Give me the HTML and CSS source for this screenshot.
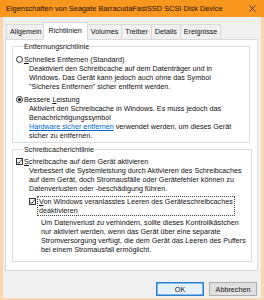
FILE: index.html
```html
<!DOCTYPE html>
<html lang="de">
<head>
<meta charset="UTF-8" />
<meta name="viewport" content="width=device-width, initial-scale=1" />
<title>Eigenschaften von Seagate BarracudaFastSSD SCSI Disk Device</title>
<link rel="stylesheet" href="styles.css">
</head>
<body>
<div class="window">
  <div class="titlebar">
    <span class="title">Eigenschaften von Seagate BarracudaFastSSD SCSI Disk Device</span>
    <svg class="close" width="7" height="7" viewBox="0 0 7 7" aria-label="Schließen">
      <path d="M0.5 0.5 L6.5 6.5 M6.5 0.5 L0.5 6.5" stroke="#2a2a2a" stroke-width="0.9" fill="none" />
    </svg>
  </div>

  <div class="frame">
    <div class="tabs">
      <span class="tab">Allgemein</span>
      <span class="tab active">Richtlinien</span>
      <span class="tab">Volumes</span>
      <span class="tab">Treiber</span>
      <span class="tab">Details</span>
      <span class="tab">Ereignisse</span>
    </div>

    <div class="panel">
      <!-- Entfernungsrichtlinie -->
      <fieldset class="group">
        <legend>Entfernungsrichtlinie</legend>

        <div class="option">
          <span class="radio"></span>
          <span class="label"><u>S</u>chnelles Entfernen (Standard)</span>
        </div>
        <p class="desc">Deaktiviert den Schreibcache auf dem Datenträger und in<br>Windows. Das Gerät kann jedoch auch ohne das Symbol<br>"Sicheres Entfernen" sicher entfernt werden.</p>

        <div class="option gap">
          <span class="radio checked"></span>
          <span class="label">Bessere <u>L</u>eistung</span>
        </div>
        <p class="desc">Aktiviert den Schreibcache in Windows. Es muss jedoch das<br>Benachrichtigungssymbol<br><a class="link" href="#">Hardware sicher entfernen</a> verwendet werden, um dieses Gerät<br>sicher zu entfernen.</p>
      </fieldset>

      <!-- Schreibcacherichtlinie -->
      <fieldset class="group second">
        <legend>Schreibcacherichtlinie</legend>

        <div class="option">
          <span class="check"><svg width="7" height="7" viewBox="0 0 7 7"><path d="M1 3.6 L2.8 5.4 L6 1.4" stroke="#222" stroke-width="0.9" fill="none" /></svg></span>
          <span class="label"><u>S</u>chreibcache auf dem Gerät aktivieren</span>
        </div>
        <p class="desc">Verbessert die Systemleistung durch Aktivieren des Schreibcaches<br>auf dem Gerät, doch Stromausfälle oder Gerätefehler können zu<br>Datenverlusten oder -beschädigung führen.</p>

        <div class="sub">
          <div class="option top">
            <span class="check"><svg width="7" height="7" viewBox="0 0 7 7"><path d="M1 3.6 L2.8 5.4 L6 1.4" stroke="#222" stroke-width="0.9" fill="none" /></svg></span>
            <span class="label focus"><u>V</u>on Windows veranlasstes Leeren des Geräteschreibcaches<br>deaktivieren</span>
          </div>
          <p class="desc">Um Datenverlust zu verhindern, sollte dieses Kontrollkästchen<br>nur aktiviert werden, wenn das Gerät über eine separate<br>Stromversorgung verfügt, die dem Gerät das Leeren des Puffers<br>bei einem Stromausfall ermöglicht.</p>
        </div>
      </fieldset>
    </div>

    <div class="buttons">
      <button class="btn default">OK</button>
      <button class="btn">Abbrechen</button>
    </div>
  </div>
</div>
</body>
</html>
```

FILE: styles.css
```css
/* Reset */
* {
  margin: 0;
  padding: 0;
  box-sizing: border-box;
}

body {
  width: 264px;
  height: 300px;
  overflow: hidden;
  font-family: 'Liberation Sans', Arial, sans-serif;
  font-size: 7.2px;
  line-height: 9px;
  color: #111;
  background: #fbdcb8;
}

.window {
  display: flex;
  flex-direction: column;
  height: 300px;
}

/* Titelleiste */
.titlebar {
  height: 17px;
  background: #f8961e;
  display: flex;
  align-items: center;
  justify-content: space-between;
  padding: 0 8px 0 6px;
  flex-shrink: 0;
}

.title {
  font-size: 7.4px;
  color: #1e1406;
  white-space: nowrap;
}

.close {
  display: block;
}

.frame {
  flex: 1;
  background: #f0f0f0;
  border-left: 3px solid #fbd7ad;
  border-right: 3px solid #fbd7ad;
  border-bottom: 2px solid #fbd7ad;
  padding: 5px 3px 0 2px;
  display: flex;
  flex-direction: column;
}

/* Reiter */
.tabs {
  display: flex;
  align-items: flex-end;
  height: 17px;
  padding-left: 1px;
}

.tab {
  height: 15px;
  line-height: 13px;
  padding: 0 3px;
  border: 1px solid #d9d9d9;
  border-bottom: none;
  margin-right: -1px;
  background: #f0f0f0;
  white-space: nowrap;
}

.tab.active {
  position: relative;
  z-index: 1;
  height: 18px;
  line-height: 15px;
  margin: 0 -1px -1px -2px;
  padding: 0 5px;
  background: #fff;
}

.panel {
  background: #fff;
  border: 1px solid #d9d9d9;
  padding: 2px 7px 8px 6px;
}

/* Gruppenfelder */
.group {
  border: 1px solid #dcdcdc;
  padding: 4px 5px 2px 3px;
}

.group legend {
  margin-left: 7px;
  padding: 0 1px;
  line-height: 9px;
}

.group.second {
  margin-top: 2px;
  padding-top: 3px;
  padding-bottom: 7px;
}

.option {
  display: flex;
  align-items: center;
  gap: 1px;
}

.option.gap {
  margin-top: 4px;
}

.option.top {
  align-items: flex-start;
}

.radio {
  width: 7px;
  height: 7px;
  border: 1px solid #333;
  border-radius: 50%;
  flex-shrink: 0;
  display: flex;
  align-items: center;
  justify-content: center;
}

.radio.checked::after {
  content: "";
  width: 3px;
  height: 3px;
  border-radius: 50%;
  background: #111;
}

.check {
  width: 7px;
  height: 7px;
  border: 1px solid #333;
  flex-shrink: 0;
  display: flex;
}

.check svg {
  display: block;
  margin: -1px;
}

.option.top .check {
  margin-top: 2px;
}

.label {
  white-space: nowrap;
}

.label.focus {
  display: inline-block;
  border: 1px dotted #444;
  margin-left: 0;
  padding: 0 1px;
}

.desc {
  margin-left: 13px;
  white-space: nowrap;
}

.link {
  color: #0066cc;
}

.sub {
  margin: 3px 0 0 13px;
}

.sub .desc {
  margin-top: 2px;
  margin-left: 12px;
}

/* Schaltflächen */
.buttons {
  display: flex;
  justify-content: flex-end;
  gap: 5px;
  margin-top: 11px;
  padding-right: 1px;
}

.btn {
  width: 48px;
  height: 14px;
  font-family: inherit;
  font-size: 7.2px;
  color: #111;
  background: #e1e1e1;
  border: 1px solid #adadad;
}

.btn.default {
  border-color: #2b7fd4;
  box-shadow: inset 0 0 0 0.5px #2b7fd4;
  background: #e5f1fb;
}
```
